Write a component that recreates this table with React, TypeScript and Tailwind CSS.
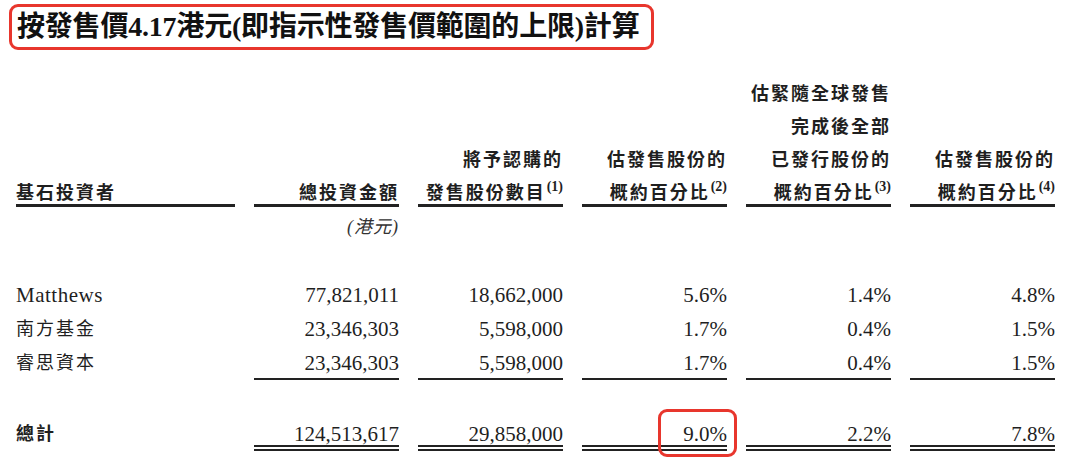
import React from 'react';

const COLS = 'grid grid-cols-[219px_145px_145px_145px_145px_145px] gap-x-[19px] pl-[16px]';
const FONT = "font-['Liberation_Serif','Noto_Sans_CJK_TC',serif]";

type Investor = {
  name: string;
  cjk: boolean;
  amount: string;
  shares: string;
  pctOffer: string;
  pctIssued: string;
  pctOffer2: string;
};

const investors: Investor[] = [
  { name: 'Matthews', cjk: false, amount: '77,821,011', shares: '18,662,000', pctOffer: '5.6%', pctIssued: '1.4%', pctOffer2: '4.8%' },
  { name: '南方基金', cjk: true, amount: '23,346,303', shares: '5,598,000', pctOffer: '1.7%', pctIssued: '0.4%', pctOffer2: '1.5%' },
  { name: '睿思資本', cjk: true, amount: '23,346,303', shares: '5,598,000', pctOffer: '1.7%', pctIssued: '0.4%', pctOffer2: '1.5%' },
];

function Note({ n }: { n: number }) {
  return (
    <span className="relative top-[3px] align-top inline-block text-[14px] leading-[14px] font-bold tracking-normal ml-[1px]">
      ({n})
    </span>
  );
}

function HeadCell({ lines, left }: { lines: React.ReactNode[]; left?: boolean }) {
  return (
    <div className="border-b-[3px] border-[#222]">
      <div className={`-mb-[6px] leading-[33px] text-[18px] font-bold tracking-[2px] ${left ? 'text-left' : 'text-right'}`}>
        {lines.map((l, i) => (
          <div key={i}>{l}</div>
        ))}
      </div>
    </div>
  );
}

function Num({ v, line }: { v: string; line?: 'single' | 'double' }) {
  const border =
    line === 'single'
      ? 'border-b-2 border-[#222]'
      : line === 'double'
      ? 'border-b-[6px] border-double border-[#222]'
      : '';
  return (
    <div className={border}>
      <div className={`text-right text-[21px] leading-[34px] ${line ? 'h-[28px]' : ''}`}>{v}</div>
    </div>
  );
}

export default function App() {
  return (
    <div className={`w-[1080px] h-[471px] bg-white text-[#1f1f1f] overflow-hidden ${FONT}`}>
      <div className="pt-[4px] pl-[9px]">
        <div className="w-[645px] h-[46px] border-[3px] border-[#e8362d] rounded-[9px] flex items-center pl-[5px]">
          <span className="text-[28px] font-bold leading-none tracking-[-0.2px] text-[#111]">
            按發售價4.17港元(即指示性發售價範圍的上限)計算
          </span>
        </div>
      </div>

      <div className={`${COLS} items-end mt-[28px]`}>
        <HeadCell left lines={['基石投資者']} />
        <HeadCell lines={['總投資金額']} />
        <HeadCell lines={['將予認購的', <>發售股份數目<Note n={1} /></>]} />
        <HeadCell lines={['估發售股份的', <>概約百分比<Note n={2} /></>]} />
        <HeadCell
          lines={['估緊隨全球發售', '完成後全部', '已發行股份的', <>概約百分比<Note n={3} /></>]}
        />
        <HeadCell lines={['估發售股份的', <>概約百分比<Note n={4} /></>]} />
      </div>

      <div className={`${COLS} mt-[3px] leading-[34px]`}>
        <div />
        <div className="text-right text-[18px] italic tracking-[1px] text-[#333]">(港元)</div>
      </div>

      <div className="mt-[34px]">
        {investors.map((r, i) => {
          const line = i === investors.length - 1 ? 'single' : undefined;
          return (
            <div key={r.name} className={COLS}>
              <div
                className={`leading-[34px] ${r.cjk ? 'text-[18px] tracking-[2px]' : 'text-[21px] tracking-[0.5px]'}`}
              >
                {r.name}
              </div>
              <Num v={r.amount} line={line} />
              <Num v={r.shares} line={line} />
              <Num v={r.pctOffer} line={line} />
              <Num v={r.pctIssued} line={line} />
              <Num v={r.pctOffer2} line={line} />
            </div>
          );
        })}
      </div>

      <div className={`${COLS} mt-[37px]`}>
        <div className="leading-[34px] text-[18px] font-bold tracking-[2px]">總計</div>
        <Num v="124,513,617" line="double" />
        <Num v="29,858,000" line="double" />
        <div className="relative">
          <Num v="9.0%" line="double" />
          <div className="absolute left-[76px] -top-[8px] w-[79px] h-[48px] border-[3px] border-[#e8362d] rounded-[9px]" />
        </div>
        <Num v="2.2%" line="double" />
        <Num v="7.8%" line="double" />
      </div>
    </div>
  );
}
